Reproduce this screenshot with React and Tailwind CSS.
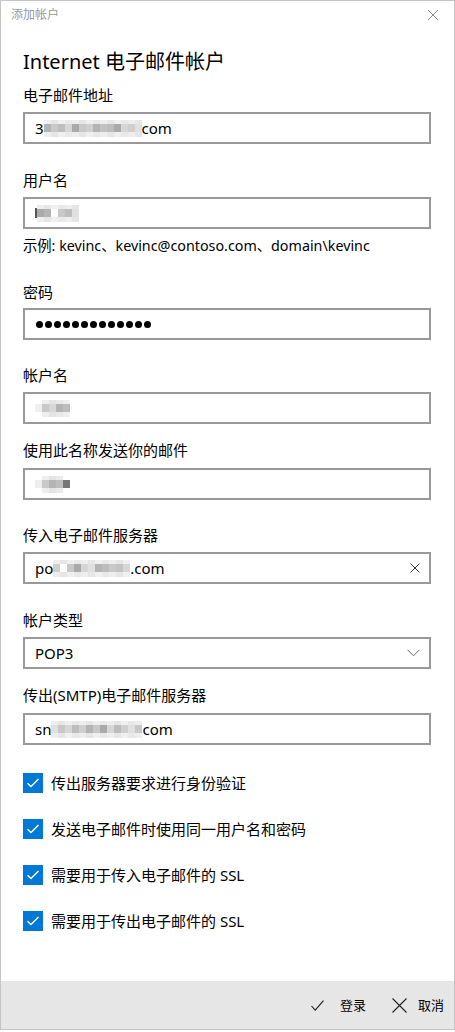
import React from 'react';

// blurred (pixelated) parts of the filled-in values
function Mosaic({ cells, top = [], bottom = [] }) {
  return (
    <span className="inline-flex flex-col align-middle">
      <span className="flex h-[4px]">
        {top.map((c, i) => <span key={i} className="w-[7px]" style={{ background: c }} />)}
      </span>
      <span className="flex h-[8px]">
        {cells.map((c, i) => <span key={i} className="w-[7px]" style={{ background: c }} />)}
      </span>
      <span className="flex h-[5px]">
        {bottom.map((c, i) => <span key={i} className="w-[7px]" style={{ background: c }} />)}
      </span>
    </span>
  );
}

function Label({ children, mt }) {
  return <div className={`h-[20px] leading-[20px] text-[15px] text-black ${mt}`}>{children}</div>;
}

function Field({ children, mt, right }) {
  return (
    <div className={`h-[32px] border-2 border-[#999999] bg-white flex items-center pl-[10px] pr-[9px] text-[15px] text-black ${mt}`}>
      <div className="flex-1 flex items-center">{children}</div>
      {right}
    </div>
  );
}

function Check({ children, mt }) {
  return (
    <div className={`flex items-center h-[20px] ${mt}`}>
      <span className="w-[20px] h-[20px] bg-[#0078d7] flex items-center justify-center">
        <svg width="14" height="14" viewBox="0 0 14 14">
          <path d="M1.5 7.2 L5 10.6 L12.5 3" fill="none" stroke="white" strokeWidth="1.4" />
        </svg>
      </span>
      <span className="ml-[8px] text-[15px] leading-[20px] text-black">{children}</span>
    </div>
  );
}

const g = ['#c8c8c8', '#b4b4b4', '#d6d6d6', '#bdbdbd', '#e0e0e0', '#aaaaaa', '#cfcfcf', '#c2c2c2'];
const lt = ['#eeeeee', '#e6e6e6', '#f0f0f0', '#e9e9e9'];
const row = (n) => lt.concat(lt, lt, lt).slice(0, n);

export default function App() {
  return (
    <div className="w-[455px] h-[1030px] border border-[#c4c4c4] bg-white flex flex-col font-[Noto_Sans,Noto_Sans_CJK_SC,sans-serif]">
      {/* title bar */}
      <div className="h-[27px] flex items-center justify-between pl-[10px] pr-[15px]">
        <span className="text-[12px] text-[#9a9a9a] leading-none">添加帐户</span>
        <svg width="12" height="12" viewBox="0 0 12 12">
          <path d="M1 1 L11 11 M11 1 L1 11" stroke="#8a8a8a" strokeWidth="1" />
        </svg>
      </div>

      <div className="flex-1 flex flex-col pl-[22px] pr-[23px]">
        <div className="mt-[20px] h-[28px] leading-[28px] text-[20px] text-black">Internet 电子邮件帐户</div>

        <Label mt="mt-[9px]">电子邮件地址</Label>
        <Field mt="mt-[7px]">
          <span>3</span>
          <Mosaic cells={[g[1], g[0], g[3], g[2], g[5], g[0], g[6], g[1], g[7], g[3], g[5], g[2], g[6], g[4]]} top={row(14)} bottom={row(14)} />
          <span>com</span>
        </Field>

        <Label mt="mt-[26px]">用户名</Label>
        <Field mt="mt-[7px]">
          <span className="w-[2px] h-[10px] bg-[#555]" />
          <Mosaic cells={[g[5], g[1], '#fff', g[0], g[3], g[4]]} top={row(6)} bottom={row(6)} />
        </Field>
        <div className="mt-[7px] h-[20px] leading-[20px] text-[14.3px] text-black">示例: kevinc、kevinc@contoso.com、domain\kevinc</div>

        <Label mt="mt-[26px]">密码</Label>
        <Field mt="mt-[6px]">
          <span className="flex gap-[2px] ml-[1px]">
            {Array.from({ length: 13 }).map((_, i) => (
              <span key={i} className="w-[7px] h-[7px] rounded-full bg-black" />
            ))}
          </span>
        </Field>

        <Label mt="mt-[25px]">帐户名</Label>
        <Field mt="mt-[7px]">
          <Mosaic cells={['#f0f0f0', g[0], g[2], g[1], g[3]]} top={['#fff', '#eee', '#e4e4e4', '#eaeaea', '#eee']} bottom={['#fff', '#eee', '#e4e4e4', '#eaeaea', '#eee']} />
        </Field>

        <Label mt="mt-[16px]">使用此名称发送你的邮件</Label>
        <Field mt="mt-[8px]">
          <Mosaic cells={['#eee', g[0], g[1], g[3], '#777']} top={['#fff', '#eee', '#e4e4e4', '#eaeaea', '#fff']} bottom={['#fff', '#eee', '#e4e4e4', '#eaeaea', '#fff']} />
        </Field>

        <Label mt="mt-[25px]">传入电子邮件服务器</Label>
        <Field
          mt="mt-[7px]"
          right={
            <svg width="10" height="10" viewBox="0 0 10 10">
              <path d="M0.5 0.5 L9.5 9.5 M9.5 0.5 L0.5 9.5" stroke="#333" strokeWidth="1" />
            </svg>
          }
        >
          <span>po</span>
          <Mosaic cells={[g[6], '#fff', g[0], g[5], g[2], g[4], g[1], g[3], g[0], g[7], g[2]]} top={row(11)} bottom={row(11)} />
          <span>.com</span>
        </Field>

        <Label mt="mt-[26px]">帐户类型</Label>
        <Field
          mt="mt-[7px]"
          right={
            <svg width="13" height="8" viewBox="0 0 13 8">
              <path d="M0.5 0.8 L6.5 6.8 L12.5 0.8" fill="none" stroke="#666" strokeWidth="1" />
            </svg>
          }
        >
          <span>POP3</span>
        </Field>

        <Label mt="mt-[16px]">传出(SMTP)电子邮件服务器</Label>
        <Field mt="mt-[8px]">
          <span>sn</span>
          <Mosaic cells={[g[4], g[0], g[2], g[3], g[6], g[1], g[0], g[5], g[2], g[3], g[6], g[4], g[0]]} top={row(13)} bottom={row(13)} />
          <span>com</span>
        </Field>

        <Check mt="mt-[28px]">传出服务器要求进行身份验证</Check>
        <Check mt="mt-[26px]">发送电子邮件时使用同一用户名和密码</Check>
        <Check mt="mt-[26px]">需要用于传入电子邮件的 SSL</Check>
        <Check mt="mt-[26px]">需要用于传出电子邮件的 SSL</Check>
      </div>

      {/* footer */}
      <div className="h-[48px] bg-[#e6e6e6] flex items-center justify-end pr-[10px] text-[13px] text-black">
        <div className="flex items-center">
          <svg width="13" height="11" viewBox="0 0 13 11">
            <path d="M0.5 6 L4.2 10.2 L12.5 0.6" fill="none" stroke="#222" strokeWidth="1.1" />
          </svg>
          <span className="ml-[16px] leading-[20px]">登录</span>
        </div>
        <div className="flex items-center ml-[26px]">
          <svg width="15" height="15" viewBox="0 0 15 15">
            <path d="M0.5 0.5 L14.5 14.5 M14.5 0.5 L0.5 14.5" stroke="#222" strokeWidth="1.1" />
          </svg>
          <span className="ml-[11px] leading-[20px]">取消</span>
        </div>
      </div>
    </div>
  );
}
